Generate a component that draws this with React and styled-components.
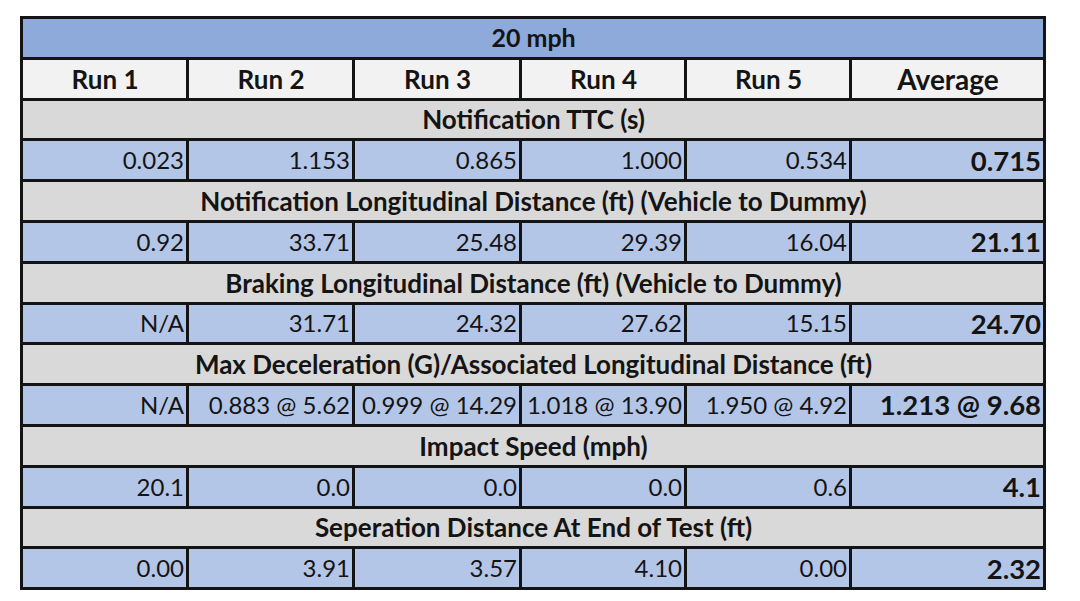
import React from 'react';
import styled, { createGlobalStyle } from 'styled-components';

const GlobalStyle = createGlobalStyle`
  body {
    margin: 0;
    background: #ffffff;
    font-family: Lato, "Open Sans", "Liberation Sans", sans-serif;
    color: #141414;
  }
`;

const Page = styled.div`
  padding: 16px 0 0 20px;
`;

const Table = styled.table`
  border-collapse: collapse;
  width: 1023px;
  table-layout: fixed;
`;

const Row = styled.tr`
  height: 40.8px;
`;

const Cell = styled.td`
  border: 3px solid #141414;
  padding: 0 2px 0 3px;
  white-space: nowrap;
  overflow: hidden;
  line-height: 1;
  text-align: ${({ align }) => align || 'right'};
  font-weight: ${({ bold }) => (bold ? 700 : 400)};
  font-size: ${({ size }) => size || 24}px;
  background: ${({ tone }) =>
    tone === 'title'
      ? '#8eaadb'
      : tone === 'head'
      ? '#f2f2f2'
      : tone === 'section'
      ? '#d9d9d9'
      : '#b4c6e7'};
`;

const sections = [
  {
    label: 'Notification TTC (s)',
    values: ['0.023', '1.153', '0.865', '1.000', '0.534'],
    avg: '0.715',
  },
  {
    label: 'Notification Longitudinal Distance (ft) (Vehicle to Dummy)',
    values: ['0.92', '33.71', '25.48', '29.39', '16.04'],
    avg: '21.11',
  },
  {
    label: 'Braking Longitudinal Distance (ft) (Vehicle to Dummy)',
    values: ['N/A', '31.71', '24.32', '27.62', '15.15'],
    avg: '24.70',
  },
  {
    label: 'Max Deceleration (G)/Associated Longitudinal Distance (ft)',
    values: ['N/A', '0.883 @ 5.62', '0.999 @ 14.29', '1.018 @ 13.90', '1.950 @ 4.92'],
    avg: '1.213 @ 9.68',
  },
  {
    label: 'Impact Speed (mph)',
    values: ['20.1', '0.0', '0.0', '0.0', '0.6'],
    avg: '4.1',
  },
  {
    label: 'Seperation Distance At End of Test (ft)',
    values: ['0.00', '3.91', '3.57', '4.10', '0.00'],
    avg: '2.32',
  },
];

const widths = [166, 166, 167, 165, 165, 194];
const headers = ['Run 1', 'Run 2', 'Run 3', 'Run 4', 'Run 5', 'Average'];

const App = () => {
  return (
    <Page>
      <GlobalStyle />
      <Table>
        <colgroup>
          {widths.map((w, i) => (
            <col key={i} style={{ width: w }} />
          ))}
        </colgroup>
        <tbody>
          <Row>
            <Cell colSpan={6} tone="title" align="center" bold size={25}>
              20 mph
            </Cell>
          </Row>
          <Row>
            {headers.map((h, i) => (
              <Cell key={h} tone="head" align="center" bold size={i === 5 ? 28 : 26}>
                {h}
              </Cell>
            ))}
          </Row>
          {sections.map((s) => (
            <React.Fragment key={s.label}>
              <Row>
                <Cell colSpan={6} tone="section" align="center" bold size={26}>
                  {s.label}
                </Cell>
              </Row>
              <Row>
                {s.values.map((v, i) => (
                  <Cell key={i}>{v}</Cell>
                ))}
                <Cell bold size={27.5}>
                  {s.avg}
                </Cell>
              </Row>
            </React.Fragment>
          ))}
        </tbody>
      </Table>
    </Page>
  );
};

export default App;
